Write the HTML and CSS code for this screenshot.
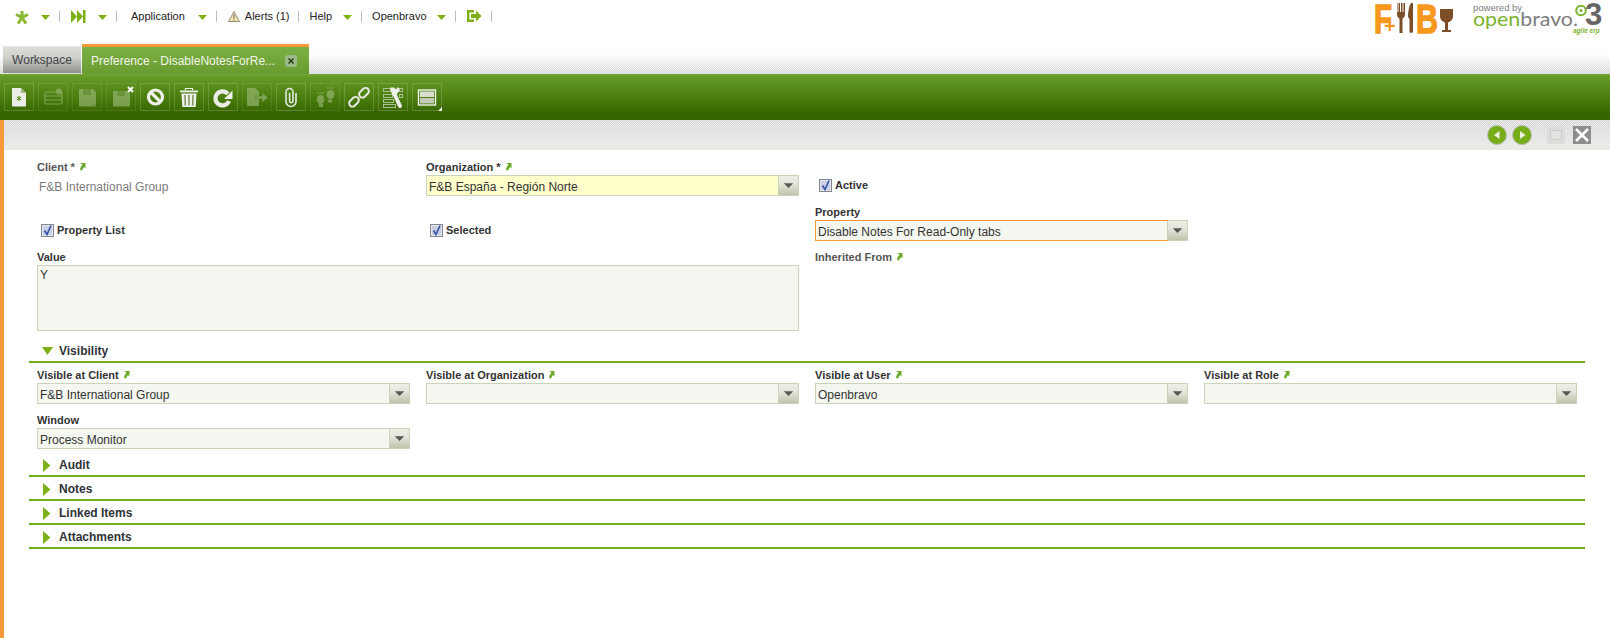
FILE: index.html
```html
<!DOCTYPE html>
<html lang="en">
<head>
<meta charset="utf-8">
<title>Preference - DisableNotesForRe...</title>
<link rel="stylesheet" href="styles.css">
</head>
<body>
<svg class="defs" width="0" height="0" aria-hidden="true">
  <defs>
    <symbol id="caret" viewBox="0 0 9 5"><path d="M0 0h9L4.500 5z" fill="#7cb015"/></symbol>
    <symbol id="link" viewBox="0 0 7 9"><path d="M1 1h5.500v5.500L5 5 2.800 8.500 1 8l.5-2.500L3.500 2.600z" fill="#6fa72a"/></symbol>
    <symbol id="check" viewBox="0 0 13 13">
      <rect x=".5" y=".5" width="12" height="12" fill="#e4e7f0" stroke="#85878e"/>
      <rect x="2" y="2" width="9" height="9" fill="#c9d0e4"/>
      <path d="M3.500 6.500 6 10.500 10 1.500" fill="none" stroke="#3c55a5" stroke-width="1.700"/>
    </symbol>
    <symbol id="drop" viewBox="0 0 20 19"><path d="M5 7h10l-5 5z" fill="#555a50"/></symbol>
  </defs>
</svg>

<header class="topbar">
  <nav class="menu">
    <svg class="ico-star" viewBox="0 0 14 13"><path d="M7 0v6M7 6.500 1 3.500M7 6.500l6-3M7 6.500 3 12.500M7 6.500l4 6" stroke="#8ab82e" stroke-width="3" fill="none"/></svg>
    <svg class="caret c12" viewBox="0 0 9 5"><use href="#caret"/></svg>
    <span class="sep sep-a"></span>
    <svg class="ico-skip" viewBox="0 0 15 13"><path d="M0 0l6 6.500L0 13zM6 0l6 6.500L6 13z" fill="#7cb015"/><rect x="12" width="2.500" height="13" fill="#7cb015"/></svg>
    <svg class="caret c12" viewBox="0 0 9 5"><use href="#caret"/></svg>
    <span class="sep sep-b"></span>
    <span class="mi">Application</span>
    <svg class="caret c13" viewBox="0 0 9 5"><use href="#caret"/></svg>
    <span class="sep sep-c"></span>
    <svg class="ico-warn" viewBox="0 0 12 11"><path d="M6 .5 11.500 10.500H.5z" fill="#f4e3a8" stroke="#8d8d84"/><path d="M6 3.500v4M6 8.500v1" stroke="#555"/></svg>
    <span class="mi mi-alert">Alerts (1)</span>
    <span class="sep sep-d"></span>
    <span class="mi">Help</span>
    <svg class="caret c11" viewBox="0 0 9 5"><use href="#caret"/></svg>
    <span class="sep sep-d"></span>
    <span class="mi">Openbravo</span>
    <svg class="caret c10" viewBox="0 0 9 5"><use href="#caret"/></svg>
    <span class="sep sep-e"></span>
    <svg class="ico-exit" viewBox="0 0 15 12"><path d="M7 1.200H1.200v9.600H7" fill="none" stroke="#7cb015" stroke-width="2.400"/><path d="M4 4h5V.5L14.500 6 9 11.500V8H4z" fill="#7cb015"/></svg>
    <span class="sep sep-f"></span>
  </nav>
  <svg class="logo-fb" viewBox="0 0 80 36" role="img" aria-label="F+B">
    <text x="0" y="33" class="lf" textLength="18" lengthAdjust="spacingAndGlyphs">F</text>
    <text x="10" y="33" class="lplus">+</text>
    <path d="M23 3v11c0 3 1.500 4 2.500 4.500V33h3V18.500c1-.5 2.500-1.500 2.500-4.500V3h-1.500v9h-1V3h-1.500v9h-1V3h-1.500v9h-1V3z" fill="#7b4e28"/>
    <path d="M37 3c-2 3-3 9-3 14l1.500 2v12c0 2.500 3.500 2.500 3.500 0V3z" fill="#7b4e28"/>
    <text x="42" y="33" class="lf" textLength="22" lengthAdjust="spacingAndGlyphs">B</text>
    <path d="M66 9h13v7c0 4-3 6-5 6.500V30h3v2h-9v-2h3v-7.500c-2-.5-5-2.500-5-6.500z" fill="#7b4e28"/>
  </svg>
  <svg class="logo-ob" viewBox="0 0 134 36" role="img" aria-label="powered by openbravo 3 agile erp">
    <text x="3" y="10.500" class="lpow">powered by</text>
    <text x="3" y="26" class="lob" textLength="105" lengthAdjust="spacingAndGlyphs"><tspan fill="#7ab32c">open</tspan><tspan fill="#7d7d7d">bravo.</tspan></text>
    <circle cx="111" cy="10.500" r="4.800" fill="none" stroke="#7ab32c" stroke-width="2"/>
    <circle cx="111" cy="10.500" r="1.500" fill="#7ab32c"/>
    <text x="115" y="25" class="l3">3</text>
    <text x="103" y="33" class="lagile">agile erp</text>
  </svg>
</header>

<div class="tabbar">
  <div class="tab tab-off">Workspace</div>
  <div class="tab tab-on">
    <span>Preference - DisableNotesForRe...</span>
    <span class="tab-close"><svg viewBox="0 0 12 11"><path d="M3.500 3 8.500 8M8.500 3l-5 5" stroke="#263015" stroke-width="1.400"/></svg></span>
  </div>
</div>

<div class="toolbar">
  <button class="tb"><svg viewBox="0 0 30 28"><path d="M8 5h9l5 5v12.500c0 .5-.5 1-1 1H9c-.5 0-1-.5-1-1z" fill="#eceee6"/><path d="M17 5v5h5" fill="#9fb58a"/><path d="M15 13v5M12.800 14l4.400 3M17.200 14l-4.400 3" stroke="#4c8a10"/></svg></button>
  <button class="tb off"><svg viewBox="0 0 30 28"><rect x="7" y="9" width="17" height="12" rx="1.500" fill="none" stroke="#a9c48b" stroke-width="1.200"/><path d="M7 13h17M7 17h17" stroke="#a9c48b"/><circle cx="21" cy="8.500" r="3" fill="#a9c48b"/></svg></button>
  <button class="tb off"><svg viewBox="0 0 30 28"><path d="M7 6h14l3 3v13c0 1-.5 1.500-1.500 1.500h-15C7 23.500 7 23 7 22z" fill="#a9c48b"/><rect x="11" y="6" width="8" height="6" fill="#7ea35b"/><circle cx="22" cy="22" r=".7" fill="#4c7a20"/></svg></button>
  <button class="tb off"><svg viewBox="0 0 30 28"><path d="M7 8h14l3 3v11c0 1-.5 1.500-1.500 1.500h-15C7 23.500 7 23 7 22z" fill="#a9c48b"/><rect x="11" y="8" width="8" height="5" fill="#7ea35b"/></svg><svg class="tb-x" viewBox="0 0 7 7"><path d="M1 1l5 5M6 1 1 6" stroke="#fff" stroke-width="2"/></svg></button>
  <button class="tb"><svg viewBox="0 0 30 28"><circle cx="15.500" cy="14" r="7" fill="none" stroke="#eef0ea" stroke-width="3.200"/><path d="M10.500 9l10 10" stroke="#eef0ea" stroke-width="3.200"/></svg></button>
  <button class="tb"><svg viewBox="0 0 30 28"><path d="M6 7.500h18v1.800H6z" fill="#eef0ea"/><path d="M11.500 7.500V5.500h7v2" fill="none" stroke="#eef0ea" stroke-width="1.200"/><path d="M7.500 10.500h15l-.8 13.500H8.300z" fill="#eef0ea"/><path d="M11 12l.3 10.500M15 12v10.500M19 12l-.3 10.500" stroke="#7b9257" stroke-width="1.500"/></svg></button>
  <button class="tb"><svg viewBox="0 0 30 28"><path d="M19.800 10.800A7 7 0 1 0 21 18" fill="none" stroke="#e9ebe5" stroke-width="4.200"/><path d="M24.500 7.500V16h-8.500z" fill="#eef0ea"/></svg></button>
  <button class="tb off"><svg viewBox="0 0 30 28"><path d="M5 5h8l4 4v14H5z" fill="#a9c48b"/><path d="M13 13h7V9.500l6 5-6 5V16h-7z" fill="#a9c48b" stroke="#5d8a2a" stroke-width=".6"/></svg></button>
  <button class="tb"><svg viewBox="0 0 30 28"><path d="M20 10v8.500a5 5 0 0 1-10 0V9a3.500 3.500 0 0 1 7 0v9a1.700 1.700 0 0 1-3.400 0V10" fill="none" stroke="#e6e9e0" stroke-width="1.600"/></svg></button>
  <button class="tb off"><svg viewBox="0 0 30 28"><ellipse cx="10.500" cy="16.500" rx="3.800" ry="4.500" fill="#a9c48b"/><ellipse cx="11" cy="22.500" rx="2.500" ry="1.800" fill="#a9c48b"/><ellipse cx="20.500" cy="11.500" rx="3.800" ry="4.500" fill="#a9c48b"/><ellipse cx="20" cy="18" rx="2.500" ry="1.800" fill="#a9c48b"/><path d="M7 10h7M17 5h7" stroke="#a9c48b" stroke-width="1.600" stroke-dasharray="1 .6"/></svg></button>
  <button class="tb"><svg viewBox="0 0 30 28"><g fill="none" stroke="#e6e9e0" stroke-width="2"><rect x="4.500" y="15.500" width="11" height="6.500" rx="3.200" transform="rotate(-45 10 18.750)"/><rect x="14.500" y="6.500" width="11" height="6.500" rx="3.200" transform="rotate(-45 20 9.750)"/></g></svg></button>
  <button class="tb"><svg viewBox="0 0 30 28"><g fill="none" stroke="#a9c091"><rect x="5.500" y="5.500" width="7" height="3"/><rect x="19.500" y="5.500" width="5" height="3"/><rect x="5.500" y="11.500" width="9" height="3"/><rect x="21.500" y="11.500" width="3" height="3"/><rect x="5.500" y="16.500" width="10" height="3"/><rect x="5.500" y="21.500" width="12" height="3"/></g><path d="M15 8l7 15" stroke="#eef0ea" stroke-width="4" stroke-linecap="round"/><path d="M12 4.500h4l3.500 3-1 5-3 .5-2.500-4.500z" fill="#eef0ea"/><path d="M20 4l2 3-4 5-1.500-3z" fill="#eef0ea"/></svg></button>
  <button class="tb"><svg viewBox="0 0 30 28"><rect x="6.500" y="7" width="17" height="15" fill="none" stroke="#f2f4ee" stroke-width="1.400"/><rect x="8" y="8.500" width="14" height="5.500" fill="#d9dfd0"/><rect x="8" y="15" width="14" height="5.500" fill="#c3cbb8"/></svg><svg class="tb-tri" viewBox="0 0 4 4"><path d="M4 0v4H0z" fill="#f2f4ee"/></svg></button>
</div>

<main class="main">
  <div class="navbar">
    <button class="round"><svg viewBox="0 0 20 20"><circle cx="10" cy="10" r="9.500" fill="#78ad1a" stroke="#b9bcb3"/><path d="M12.500 6v8L7 10z" fill="#eef2e0"/></svg></button>
    <button class="round round-next"><svg viewBox="0 0 20 20"><circle cx="10" cy="10" r="9.500" fill="#78ad1a" stroke="#b9bcb3"/><path d="M8 6v8l5.500-4z" fill="#eef2e0"/></svg></button>
    <span class="win win-max"><span></span></span>
    <span class="win win-close"><svg viewBox="0 0 18 18"><path d="M3 3l12 12M15 3 3 15" stroke="#fff" stroke-width="2.600"/></svg></span>
  </div>

  <section class="form">
    <div class="grid">
      <div class="cell">
        <label class="lbl ro">Client *<svg class="lk"><use href="#link"/></svg></label>
        <div class="static">F&amp;B International Group</div>
      </div>
      <div class="cell">
        <label class="lbl">Organization *<svg class="lk"><use href="#link"/></svg></label>
        <div class="field req"><span class="val">F&amp;B España - Región Norte</span><span class="btn"><svg><use href="#drop"/></svg></span></div>
      </div>
      <div class="cell cb"><svg class="chk"><use href="#check"/></svg><span>Active</span></div>
    </div>
    <div class="grid">
      <div class="cell cb"><svg class="chk"><use href="#check"/></svg><span>Property List</span></div>
      <div class="cell cb"><svg class="chk"><use href="#check"/></svg><span>Selected</span></div>
      <div class="cell">
        <label class="lbl">Property</label>
        <div class="field focus"><span class="val">Disable Notes For Read-Only tabs</span><span class="btn"><svg><use href="#drop"/></svg></span></div>
      </div>
    </div>
    <div class="grid tall">
      <div class="cell wide">
        <label class="lbl">Value</label>
        <div class="area">Y</div>
      </div>
      <div class="cell">
        <label class="lbl ro">Inherited From<svg class="lk"><use href="#link"/></svg></label>
      </div>
    </div>
  </section>

  <div class="sec"><svg class="arr" viewBox="0 0 12 9"><path d="M0 0h11L5.500 8z" fill="#7cb015"/></svg><span>Visibility</span></div>
  <section class="form form-vis">
    <div class="grid">
      <div class="cell">
        <label class="lbl">Visible at Client<svg class="lk"><use href="#link"/></svg></label>
        <div class="field"><span class="val">F&amp;B International Group</span><span class="btn"><svg><use href="#drop"/></svg></span></div>
      </div>
      <div class="cell">
        <label class="lbl">Visible at Organization<svg class="lk"><use href="#link"/></svg></label>
        <div class="field"><span class="val"></span><span class="btn"><svg><use href="#drop"/></svg></span></div>
      </div>
      <div class="cell">
        <label class="lbl">Visible at User<svg class="lk"><use href="#link"/></svg></label>
        <div class="field"><span class="val">Openbravo</span><span class="btn"><svg><use href="#drop"/></svg></span></div>
      </div>
      <div class="cell">
        <label class="lbl">Visible at Role<svg class="lk"><use href="#link"/></svg></label>
        <div class="field"><span class="val"></span><span class="btn"><svg><use href="#drop"/></svg></span></div>
      </div>
    </div>
    <div class="grid last">
      <div class="cell">
        <label class="lbl">Window</label>
        <div class="field"><span class="val">Process Monitor</span><span class="btn"><svg><use href="#drop"/></svg></span></div>
      </div>
    </div>
  </section>

  <div class="sec"><svg class="arr arr-r" viewBox="0 0 8 13"><path d="M0 0l7.500 6.500L0 13z" fill="#7cb015"/></svg><span>Audit</span></div>
  <div class="sec"><svg class="arr arr-r" viewBox="0 0 8 13"><path d="M0 0l7.500 6.500L0 13z" fill="#7cb015"/></svg><span>Notes</span></div>
  <div class="sec"><svg class="arr arr-r" viewBox="0 0 8 13"><path d="M0 0l7.500 6.500L0 13z" fill="#7cb015"/></svg><span>Linked Items</span></div>
  <div class="sec"><svg class="arr arr-r" viewBox="0 0 8 13"><path d="M0 0l7.500 6.500L0 13z" fill="#7cb015"/></svg><span>Attachments</span></div>
</main>
</body>
</html>
```
FILE: styles.css
```css
* { box-sizing: border-box; }
html, body { margin: 0; height: 100%; }
body {
  background: #fff;
  color: #333;
  font-family: "Liberation Sans", Arial, sans-serif;
  font-size: 12px;
  display: flex;
  flex-direction: column;
  height: 638px;
  overflow: hidden;
}
.defs { position: absolute; }

/* top bar */
.topbar { height: 44px; flex: none; display: flex; align-items: flex-start; }
.menu { display: flex; align-items: center; height: 32px; padding-left: 15px; flex: none; }
.mi { font-size: 11px; color: #222; white-space: nowrap; }
.mi-alert { margin-left: 5px; }
.caret { width: 9px; height: 5px; margin-top: 2px; flex: none; }
.c10 { margin-left: 10px; }
.c11 { margin-left: 11px; }
.c12 { margin-left: 12px; }
.c13 { margin-left: 13px; }
.sep { width: 1px; height: 11px; background: #bdbdbd; flex: none; }
.sep-a { margin-left: 9px; margin-right: 11px; }
.sep-b { margin-left: 9px; margin-right: 14px; }
.sep-c { margin-left: 9px; margin-right: 11px; }
.sep-d { margin-left: 9px; margin-right: 10px; }
.sep-e { margin-left: 9px; margin-right: 11px; }
.sep-f { margin-left: 9px; }
.ico-star { width: 14px; height: 13px; flex: none; margin-top: 2px; }
.ico-skip { width: 15px; height: 13px; flex: none; }
.ico-warn { width: 12px; height: 11px; flex: none; }
.ico-exit { width: 15px; height: 12px; flex: none; }
.logo-fb { width: 80px; height: 36px; margin-left: auto; flex: none; }
.logo-ob { width: 134px; height: 36px; margin-left: 16px; margin-right: 6px; flex: none; }
.lf { font: bold 41px "Liberation Sans", sans-serif; fill: #f7981d; stroke: #f7981d; stroke-width: 1.500px; }
.lplus { font: bold 20px "Liberation Sans", sans-serif; fill: #f7981d; }
.lpow { font: 9.500px "Liberation Sans", sans-serif; fill: #7d7d7d; }
.lob { font: 20px "Lato", sans-serif; }
.l3 { font: bold 31px "Liberation Sans", sans-serif; fill: #666; }
.lagile { font: italic bold 6.500px "Liberation Sans", sans-serif; fill: #7ab32c; }

/* tabs */
.tabbar {
  height: 30px;
  flex: none;
  display: flex;
  align-items: flex-end;
  padding-left: 3px;
  background:
    linear-gradient(#fff 0, #fff 10px, rgba(255,255,255,0) 29px),
    repeating-conic-gradient(#cdcdcd 0 25%, #f0f0f0 0 50%) 0 0 / 2px 2px;
}
.tab { display: flex; align-items: center; white-space: nowrap; }
.tab-off {
  width: 78px;
  height: 27px;
  justify-content: center;
  color: #3e4248;
  background: linear-gradient(#dcddd6, #cfd0ca 40%, #8f918c);
  border-top: 1px solid #e6e6e2;
  margin-bottom: 1px;
}
.tab-on {
  width: 227px;
  height: 30px;
  margin-left: 1px;
  padding-left: 9px;
  color: #f2f6e8;
  background: linear-gradient(#7ab045, #699c30);
  border-top: 3px solid #f7983a;
}
.tab-close {
  width: 12px;
  height: 12px;
  margin-left: 10px;
  border-radius: 3px;
  background: #9cb98a;
  display: flex;
}
.tab-close svg { width: 12px; height: 12px; }

/* toolbar */
.toolbar {
  height: 46px;
  flex: none;
  display: flex;
  gap: 4px;
  padding: 9px 0 0 4px;
  background: linear-gradient(#72a632 0, #659a27 3px, #4c7f0f 22px, #366400 40px, #366400);
}
.tb {
  width: 30px;
  height: 28px;
  padding: 0;
  position: relative;
  background: none;
  border: 1px solid rgba(255,255,255,.17);
  flex: none;
}
.tb.off { border-color: rgba(255,255,255,.09); }
.tb svg { position: absolute; left: -1px; top: -1px; width: 30px; height: 28px; }
.tb.off > svg:first-child { opacity: .55; }
.tb .tb-x { left: 20px; top: 2px; width: 7px; height: 7px; }
.tb .tb-tri { left: 25px; top: 23px; width: 4px; height: 4px; }

/* main */
.main { flex: 1; border-left: 4px solid #f7983a; min-height: 0; }
.navbar {
  height: 30px;
  display: flex;
  align-items: center;
  padding-left: 1483px;
  background:
    linear-gradient(rgba(232,234,230,0) 0, #e8eae6 24px),
    repeating-conic-gradient(#d0d0d0 0 25%, #eeeeee 0 50%) 0 0 / 2px 2px;
}
.round { width: 20px; height: 20px; padding: 0; border: 0; background: none; flex: none; }
.round svg { width: 20px; height: 20px; display: block; }
.round-next { margin-left: 5px; }
.win { width: 18px; height: 18px; display: flex; align-items: center; justify-content: center; flex: none; }
.win-max { margin-left: 15px; background: #dcdedb; }
.win-max span { width: 12px; height: 10px; border: 1px solid #c9cbc7; background: #e1e3df; }
.win-close { margin-left: 8px; background: #8d8d8d; }
.win-close svg { width: 18px; height: 18px; }

.form { padding: 10px 0 0 33px; }
.form-vis { padding-top: 5px; }
.grid { display: grid; grid-template-columns: repeat(4, 373px); column-gap: 16px; height: 45px; }
.grid.tall { height: 89px; }
.grid.last { height: 40px; }
.lbl { display: flex; align-items: center; height: 13px; margin-bottom: 2px; font-size: 11px; font-weight: bold; color: #333; }
.lbl.ro { color: #565656; }
.lk { width: 7px; height: 9px; margin-left: 4px; }
.static { height: 21px; line-height: 25px; padding-left: 2px; color: #7b7b7b; white-space: nowrap; }
.field {
  display: flex;
  height: 21px;
  border: 1px solid #c9d4b9;
  background: #f4f7ef;
}
.val { flex: 1; height: 19px; padding-left: 2px; line-height: 23px; color: #333; white-space: nowrap; }
.btn {
  width: 20px;
  flex: none;
  border-left: 1px solid #c9d4b9;
  background: linear-gradient(#eef0e6, #e4e6da 40%, #bfc4ad);
  display: flex;
}
.btn svg { width: 19px; height: 19px; }
.req { background: #ffffcc; }
.focus { position: relative; }
.focus .val { outline: 1px solid #f7983a; outline-offset: 0; }
.cb { display: flex; align-items: center; height: 15px; margin-top: 18px; padding-left: 4px; font-size: 11px; font-weight: bold; color: #333; }
.cb span { position: relative; top: -1px; }
.chk { width: 13px; height: 13px; margin-right: 3px; flex: none; }
.wide { grid-column: span 2; }
.area {
  height: 66px;
  border: 1px solid #c9d4b9;
  background: #f4f7ef;
  padding: 2px;
  color: #333;
}

/* sections */
.sec {
  height: 24px;
  margin: 0 25px;
  padding-top: 2px;
  border-bottom: 2px solid #76ad14;
  display: flex;
  align-items: center;
  font-weight: bold;
  color: #2f3338;
}
.arr { width: 12px; height: 9px; margin-left: 13px; margin-right: 5px; flex: none; }
.arr-r { width: 8px; height: 13px; margin-left: 14px; margin-right: 8px; }
```
